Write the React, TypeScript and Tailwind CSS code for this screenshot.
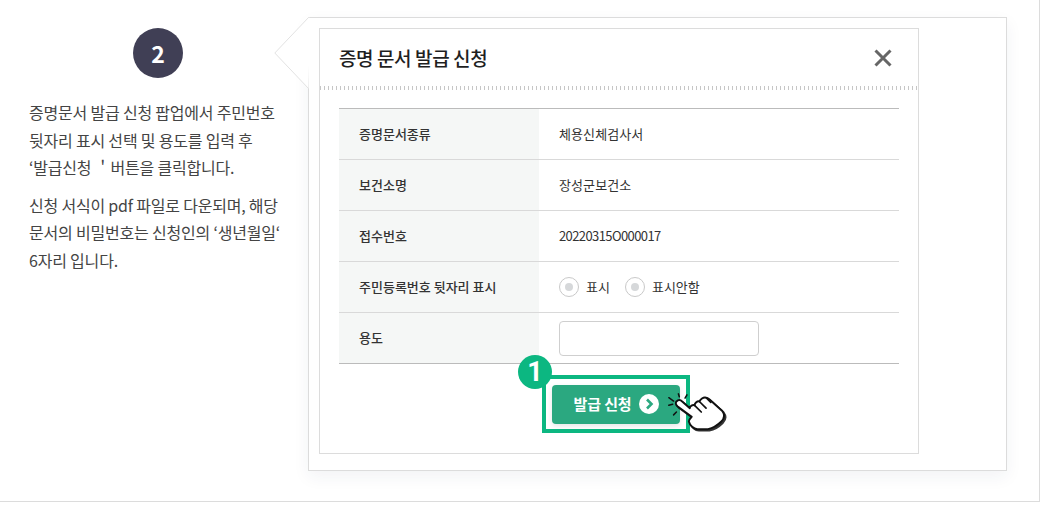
import React from "react";

const font = { fontFamily: '"Noto Sans CJK KR", "Noto Sans", sans-serif' };

const rows: [string, React.ReactNode][] = [
  ["증명문서종류", <span className="tracking-[0.1px]">체용신체검사서</span>],
  ["보건소명", <span className="tracking-[0.1px]">장성군보건소</span>],
  ["접수번호", <span className="tracking-[-0.6px]">20220315O000017</span>],
];

function Radio({ label }: { label: string }) {
  return (
    <span className="flex items-center gap-[7px]">
      <span className="flex h-5 w-5 items-center justify-center rounded-full border border-[#c9c9c9] bg-white">
        <span className="h-2 w-2 rounded-full bg-[#d6d8da]" />
      </span>
      <span>{label}</span>
    </span>
  );
}

function Row({ label, children }: { label: string; children: React.ReactNode }) {
  return (
    <div className="flex h-[51px] border-b border-[#d9d9d9] text-[13px] tracking-[0px] text-[#333]">
      <div className="flex w-[200px] items-center bg-[#f5f7f6] pl-5 font-medium">{label}</div>
      <div className="flex flex-1 items-center pl-5">{children}</div>
    </div>
  );
}

export default function App() {
  return (
    <div className="h-[502px] w-[1040px] border-r border-b border-[#dcdcdc] bg-white" style={font}>
      <div className="flex">
        <div className="w-[308px] shrink-0 pl-[29px] pt-[28px]">
          <div className="ml-[104px] flex h-[50px] w-[50px] items-center justify-center rounded-full bg-[#403f55] text-[23px] font-bold text-white">
            2
          </div>
          <div className="mt-[21px] w-[262px] text-[16px] leading-[27.5px] tracking-[-0.2px] text-[#444]">
            <p className="whitespace-nowrap">증명문서 발급 신청 팝업에서 주민번호</p>
            <p className="whitespace-nowrap">뒷자리 표시 선택 및 용도를 입력 후</p>
            <p className="whitespace-nowrap">‘발급신청 ＇버튼을 클릭합니다.</p>
            <p className="mt-[10px] whitespace-nowrap">신청 서식이 pdf 파일로 다운되며, 해당</p>
            <p className="whitespace-nowrap">문서의 비밀번호는 신청인의 ‘생년월일‘</p>
            <p className="whitespace-nowrap">6자리 입니다.</p>
          </div>
        </div>

        <div className="relative mt-[17px] h-[454px] w-[699px] border border-[#dcdcdc] bg-white p-[10px] shadow-[0_6px_16px_rgba(40,50,90,0.06)]">
          <svg className="absolute left-[-35px] top-[-1px]" width="36" height="74" viewBox="0 0 36 74">
            <path d="M36 0.5 L34.5 0.5 L0.8 36 L34.5 71.5" fill="#fff" stroke="#e2e2e2" strokeWidth="1" />
            <rect x="35" y="1" width="1" height="71" fill="#fff" />
          </svg>

          <div className="h-[426px] w-[600px] border border-[#dcdcdc] bg-white">
            <div className="flex h-[57px] items-center justify-between pl-[19px] pr-[25px]">
              <h2 className="mt-[2px] text-[19px] font-medium tracking-[-0.4px] text-[#1f1f1f]">증명 문서 발급 신청</h2>
              <svg width="20" height="20" viewBox="0 0 20 20">
                <path d="M2.5 2.5 L17.5 17.5 M17.5 2.5 L2.5 17.5" stroke="#666" strokeWidth="3" />
              </svg>
            </div>
            <div className="h-[4px] bg-[repeating-linear-gradient(90deg,#c6c6c6_0,#c6c6c6_1px,transparent_1px,transparent_4px)]" />

            <div className="mx-[19px] mt-[18px] w-[560px] border-t border-[#bbbbbb]">
              {rows.map(([l, v]) => (
                <Row key={l} label={l}>
                  {v}
                </Row>
              ))}
              <Row label="주민등록번호 뒷자리 표시">
                <span className="flex gap-[15px]">
                  <Radio label="표시" />
                  <Radio label="표시안함" />
                </span>
              </Row>
              <div className="flex h-[51px] border-b border-[#bbbbbb] text-[13px] text-[#333]">
                <div className="flex w-[200px] items-center bg-[#f5f7f6] pl-5 font-medium">용도</div>
                <div className="flex flex-1 items-center pl-5">
                  <div className="h-[35px] w-[200px] rounded-[4px] border border-[#cfcfcf] bg-white" />
                </div>
              </div>
            </div>

            <div className="relative ml-[222px] mt-[11px] flex h-[58px] w-[148px] items-center justify-center border-[4px] border-[#0cb781] bg-white">
              <div className="flex h-[39px] w-[128px] items-center justify-center gap-[7px] rounded-[4px] bg-[#2ba880] text-[15px] font-bold tracking-[-0.1px] text-white shadow-[0_2px_5px_rgba(0,0,0,0.1)]">
                <span>발급 신청</span>
                <svg width="20" height="20" viewBox="0 0 20 20">
                  <circle cx="10" cy="10" r="10" fill="#fff" />
                  <path d="M8 5.5 L12.5 10 L8 14.5" fill="none" stroke="#2ba880" strokeWidth="2.6" />
                </svg>
              </div>
              <div className="absolute left-[-28px] top-[-24px] flex h-[34px] w-[34px] items-center justify-center rounded-full bg-[#0cb781] font-['Roboto'] text-[27px] font-bold leading-none text-white">
                1
              </div>
              <svg className="absolute left-[119px] top-[11px]" width="63" height="44" viewBox="0 0 66 46">
                <g stroke="#111" strokeWidth="1.6" strokeLinecap="round">
                  <path d="M14 4 L15 7" />
                  <path d="M23 5 L21 8.5" />
                  <path d="M4 8 L9 11.5" />
                  <path d="M4 16 L8 15" />
                  <path d="M9 26 L12 23" />
                </g>
                <path
                  d="M12 12 C14 10 16 10 18 12 L26 19 C26 17 29 15 31 16 C31 14 34 11 36 12 C37 10 40 7 43 8 C45 8 47 10 49 12 L60 22 C63 26 62 30 59 33 C55 37 50 40 45 41 L34 41 C30 41 26 37 25 33 C25 31 27 29 28 28 L13 17 C11 15 11 13 12 12 Z"
                  fill="#111"
                  stroke="#111"
                  strokeWidth="2"
                  transform="translate(1.5 1.5)"
                  opacity="0.85"
                />
                <path
                  d="M12 12 C14 10 16 10 18 12 L26 19 C26 17 29 15 31 16 C31 14 34 11 36 12 C37 10 40 7 43 8 C45 8 47 10 49 12 L60 22 C63 26 62 30 59 33 C55 37 50 40 45 41 L34 41 C30 41 26 37 25 33 C25 31 27 29 28 28 L13 17 C11 15 11 13 12 12 Z"
                  fill="#fff"
                  stroke="#111"
                  strokeWidth="2"
                  strokeLinejoin="round"
                />
                <path d="M31 16 L38 23 M36 12 L43 19 M43 8 L48 13" stroke="#111" strokeWidth="1.8" fill="none" strokeLinecap="round" />
              </svg>
            </div>
          </div>
        </div>
      </div>
    </div>
  );
}
